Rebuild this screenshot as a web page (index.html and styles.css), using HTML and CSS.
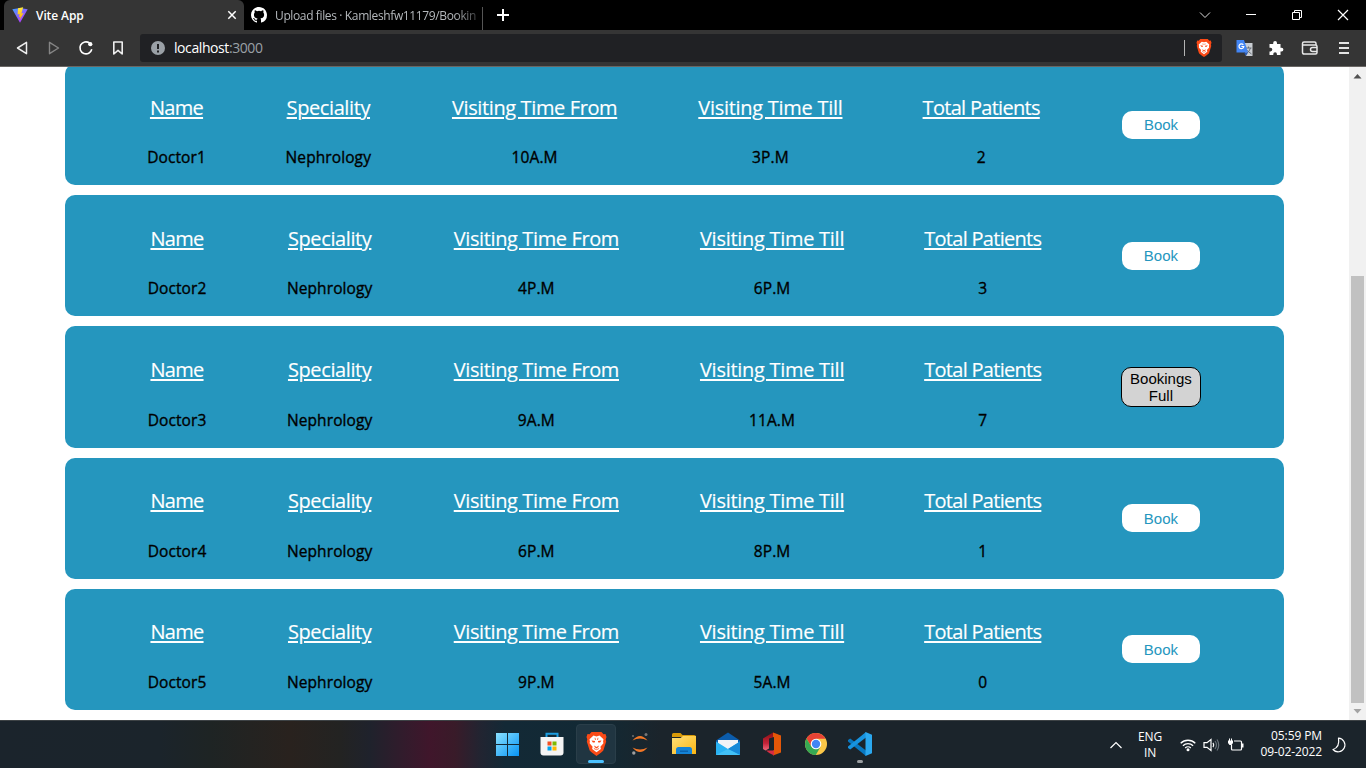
FILE: index.html
```html
<!DOCTYPE html>
<html lang="en">
<head>
<meta charset="utf-8">
<title>Vite App</title>
<link rel="stylesheet" href="styles.css">
</head>
<body>
<svg width="0" height="0" class="defs">
  <defs>
    <linearGradient id="win" x1="0" y1="0" x2="1" y2="1"><stop offset="0" stop-color="#8ae1ff"/><stop offset="1" stop-color="#0794f5"/></linearGradient>
    <linearGradient id="vite" x1="0" y1="0" x2=".7" y2="1"><stop offset="0" stop-color="#41a3ff"/><stop offset="1" stop-color="#bd34fe"/></linearGradient>
    <linearGradient id="bolt" x1="0" y1="0" x2="0" y2="1"><stop offset="0" stop-color="#ffea40"/><stop offset="1" stop-color="#ffa800"/></linearGradient>
    <linearGradient id="folder" x1="0" y1="0" x2="1" y2="1"><stop offset="0" stop-color="#ffe07a"/><stop offset="1" stop-color="#fbb612"/></linearGradient>
    <linearGradient id="office" x1="0" y1="0" x2="0" y2="1"><stop offset="0" stop-color="#8c0f12"/><stop offset=".6" stop-color="#c4243a"/><stop offset="1" stop-color="#f06a7d"/></linearGradient>
    <symbol id="lion" viewBox="0 0 20 24">
      <path fill="#fb4a16" d="M5 0h10l2 2.300 2-.2 1 3-.8 2.300.5 2-2.900 9.200Q16 20 10 24 4 20 3.200 18.600L.3 9.400l.5-2L0 5.100l1-3 2 .2z"/>
      <path fill="#fff" d="M7 3.600 10 4.400 13 3.600 17 7.200l-.4 2.400.3 1.600-3 3.600.5 2.200L10 20.200l-4.400-3.200.5-2.200-3-3.600.3-1.600L3 7.200z"/>
      <path fill="#fb4a16" d="M5 8.400 8.600 9 8.200 10.600 6.400 10.400zM15 8.400 11.400 9l.4 1.600 1.800-.2zM7.600 13.600 10 15l2.400-1.400-.6 1.700L10 16.400l-1.800-1.100z"/>
      <path fill="none" stroke="#fb4a16" stroke-width=".8" d="M8.500 5.800 9 8M11.500 5.800 11 8M7.400 16.500 10 17.700l2.600-1.200"/>
    </symbol>
  </defs>
</svg>
<div class="window">
  <header class="tabs">
    <div class="tab tab-active">
      <svg width="16" height="16" viewBox="0 0 16 16"><path fill="url(#vite)" d="M.3 2.200 8 .9l7.700 1.300L8 15.800z"/><path fill="url(#bolt)" d="M11.200.2 6 1.200 5.600 7.500l2-.4-.6 3 1.400-.4-.9 3.600L11.600 6l-2.200.4z"/></svg>
      <span class="tab-title">Vite App</span>
      <svg class="tab-close" width="10" height="10" viewBox="0 0 10 10"><path stroke="#fff" stroke-width="1.500" d="m1.300 1.300 7.400 7.400M8.700 1.300 1.300 8.700"/></svg>
    </div>
    <div class="tab tab-idle">
      <svg width="16" height="16" viewBox="0 0 16 16"><path fill="#fff" d="M8 0C3.580 0 0 3.580 0 8c0 3.540 2.290 6.530 5.470 7.590.4.070.55-.17.55-.38 0-.19-.01-.82-.01-1.490-2.010.37-2.530-.49-2.690-.94-.09-.23-.48-.94-.82-1.130-.28-.15-.68-.52-.01-.53.63-.01 1.080.58 1.230.82.72 1.210 1.870.87 2.330.66.070-.52.28-.87.51-1.070-1.780-.2-3.640-.89-3.640-3.950 0-.87.31-1.590.82-2.150-.08-.2-.36-1.020.08-2.120 0 0 .67-.21 2.200.82a7.400 7.400 0 0 1 4 0c1.530-1.040 2.200-.82 2.200-.82.44 1.100.16 1.920.08 2.120.51.56.82 1.270.82 2.150 0 3.070-1.870 3.750-3.650 3.950.29.25.54.73.54 1.480 0 1.070-.01 1.930-.01 2.200 0 .21.15.46.55.38A8 8 0 0 0 16 8c0-4.420-3.580-8-8-8z"/></svg>
      <span class="tab-title">Upload files · Kamleshfw11179/Bookin</span>
    </div>
    <svg class="new-tab" width="12" height="12" viewBox="0 0 12 12"><path stroke="#fff" stroke-width="2" d="M6 0v12M0 6h12"/></svg>
    <div class="window-buttons">
      <svg width="12" height="12" viewBox="0 0 12 12"><path fill="none" stroke="#ddd" d="m1 3.500 5 5 5-5"/></svg>
      <svg width="12" height="12" viewBox="0 0 12 12"><path stroke="#fff" d="M1 5.500h10"/></svg>
      <svg width="12" height="12" viewBox="0 0 12 12"><path fill="none" stroke="#fff" d="M1.500 3.500h7v7h-7zM3.500 3V1.500h7v7H9"/></svg>
      <svg width="12" height="12" viewBox="0 0 12 12"><path stroke="#fff" stroke-width="1.200" d="m1 1 10 10M11 1 1 11"/></svg>
    </div>
  </header>

  <nav class="toolbar">
    <div class="nav-buttons">
      <svg width="16" height="16" viewBox="0 0 16 16"><path fill="none" stroke="#eee" stroke-width="1.500" stroke-linejoin="round" d="M12.500 2.300v11.400L3.500 8z"/></svg>
      <svg width="16" height="16" viewBox="0 0 16 16"><path fill="none" stroke="#858585" stroke-width="1.400" stroke-linejoin="round" d="M3.500 2.300v11.400L12.500 8z"/></svg>
      <svg width="16" height="16" viewBox="0 0 16 16"><path fill="none" stroke="#fff" stroke-width="1.600" d="M13.800 9.300A6 6 0 1 1 11.500 3"/><circle cx="12.300" cy="4.200" r="2.100" fill="#fff"/></svg>
      <svg width="16" height="16" viewBox="0 0 16 16"><path fill="none" stroke="#eee" stroke-width="1.600" stroke-linejoin="round" d="M3.800 2h8.400v12L8 10.300 3.800 14z"/></svg>
    </div>
    <div class="address">
      <svg width="14" height="14" viewBox="0 0 14 14"><circle cx="7" cy="7" r="7" fill="#9aa0a6"/><path stroke="#202124" stroke-width="2" d="M7 3v5M7 9.500v2"/></svg>
      <span class="url">localhost<span class="port">:3000</span></span>
      <span class="divider"></span>
      <svg class="shield" width="16" height="18"><use href="#lion"/></svg>
    </div>
    <svg class="translate" width="17" height="17" viewBox="0 0 17 17"><path fill="#c9cdd2" d="M7 3h9.500v13H10z"/><path stroke="#687078" fill="none" d="M9.500 8h6M12.500 6.500V8M14.500 8q-1 3.500-4 5.500M10.500 10l5 4"/><path fill="#4285f4" d="M.5 0H8l4 12.500H.5z"/><path fill="#2858b0" d="m8 12.500 4 0-2 3.500z"/><path fill="none" stroke="#fff" stroke-width="1.200" d="M7.300 4.800A2.400 2.400 0 1 0 7.800 6.500H5.400"/></svg>
    <svg class="puzzle" width="16" height="16" viewBox="0 0 16 16"><path fill="#fff" d="M1.500 4h3.700V3a1.900 1.900 0 0 1 3.800 0v1h3.500v3.700h1a1.900 1.900 0 0 1 0 3.800h-1V15H8.900v-1a1.800 1.800 0 0 0-3.600 0v1H1.500v-3.600h1a1.800 1.800 0 0 0 0-3.600h-1z"/></svg>
    <svg class="wallet" width="18" height="16" viewBox="0 0 18 16"><path fill="none" stroke="#e8e8e8" stroke-width="1.500" d="M15 5V3.500Q15 2 13.500 2H3Q1.500 2 1.500 3.500v8.700Q1.500 14 3.300 14h11.200Q16 14 16 12.500v-6Q16 5 14.500 5H2M16 7.500h-4.500a2 2 0 0 0 0 4H16"/></svg>
    <svg class="menu" width="10" height="14" viewBox="0 0 10 14"><path stroke="#e4e4e4" stroke-width="2" d="M0 2h10M0 7h10M0 12h10"/></svg>
  </nav>

  <main class="page">
    <section class="doctors">
      <article class="card card-first">
        <div class="cell"><h3 class="h-name">Name</h3><p>Doctor1</p></div>
        <div class="cell"><h3 class="h-spec">Speciality</h3><p>Nephrology</p></div>
        <div class="cell"><h3 class="h-from">Visiting Time From</h3><p>10A.M</p></div>
        <div class="cell"><h3 class="h-till">Visiting Time Till</h3><p>3P.M</p></div>
        <div class="cell"><h3 class="h-total">Total Patients</h3><p>2</p></div>
        <button class="book">Book</button>
      </article>
      <article class="card">
        <div class="cell"><h3 class="h-name">Name</h3><p>Doctor2</p></div>
        <div class="cell"><h3 class="h-spec">Speciality</h3><p>Nephrology</p></div>
        <div class="cell"><h3 class="h-from">Visiting Time From</h3><p>4P.M</p></div>
        <div class="cell"><h3 class="h-till">Visiting Time Till</h3><p>6P.M</p></div>
        <div class="cell"><h3 class="h-total">Total Patients</h3><p>3</p></div>
        <button class="book">Book</button>
      </article>
      <article class="card">
        <div class="cell"><h3 class="h-name">Name</h3><p>Doctor3</p></div>
        <div class="cell"><h3 class="h-spec">Speciality</h3><p>Nephrology</p></div>
        <div class="cell"><h3 class="h-from">Visiting Time From</h3><p>9A.M</p></div>
        <div class="cell"><h3 class="h-till">Visiting Time Till</h3><p>11A.M</p></div>
        <div class="cell"><h3 class="h-total">Total Patients</h3><p>7</p></div>
        <button class="book book-full">Bookings Full</button>
      </article>
      <article class="card">
        <div class="cell"><h3 class="h-name">Name</h3><p>Doctor4</p></div>
        <div class="cell"><h3 class="h-spec">Speciality</h3><p>Nephrology</p></div>
        <div class="cell"><h3 class="h-from">Visiting Time From</h3><p>6P.M</p></div>
        <div class="cell"><h3 class="h-till">Visiting Time Till</h3><p>8P.M</p></div>
        <div class="cell"><h3 class="h-total">Total Patients</h3><p>1</p></div>
        <button class="book">Book</button>
      </article>
      <article class="card">
        <div class="cell"><h3 class="h-name">Name</h3><p>Doctor5</p></div>
        <div class="cell"><h3 class="h-spec">Speciality</h3><p>Nephrology</p></div>
        <div class="cell"><h3 class="h-from">Visiting Time From</h3><p>9P.M</p></div>
        <div class="cell"><h3 class="h-till">Visiting Time Till</h3><p>5A.M</p></div>
        <div class="cell"><h3 class="h-total">Total Patients</h3><p>0</p></div>
        <button class="book">Book</button>
      </article>
    </section>
    <aside class="scrollbar">
      <svg width="17" height="17" viewBox="0 0 17 17"><path fill="#505050" d="M8.500 7 12.500 11.500h-8z"/></svg>
      <div class="thumb"></div>
      <svg width="17" height="17" viewBox="0 0 17 17"><path fill="#a3a3a3" d="M8.500 10.500 12.500 6h-8z"/></svg>
    </aside>
  </main>

  <footer class="taskbar">
    <div class="apps">
      <div class="app"><svg width="24" height="24" viewBox="0 0 24 24"><path fill="url(#win)" d="M0 1h11v11H0zM12 1h11v11H12zM0 13h11v11H0zM12 13h11v11H12z"/></svg></div>
      <div class="app"><svg width="24" height="24" viewBox="0 0 24 24"><path fill="none" stroke="#1c9de0" stroke-width="2" d="M6.500 6V1.800h11V6"/><path fill="#f4f4f4" d="M.5 5h23v15.500q0 3-3 3h-17q-3 0-3-3z"/><path fill="#f25022" d="M7.500 9.500h4v4h-4z"/><path fill="#7fba00" d="M12.500 9.500h4v4h-4z"/><path fill="#00a4ef" d="M7.500 14.500h4v4h-4z"/><path fill="#ffb900" d="M12.500 14.500h4v4h-4z"/></svg></div>
      <div class="app app-active"><svg width="21" height="24"><use href="#lion"/></svg><span class="running"></span></div>
      <div class="app"><svg width="20" height="24" viewBox="0 0 20 24"><path fill="#f37726" d="M2.500 8.500Q10-.5 17.500 8.500 10 4.500 2.500 8.500zM2.500 15.500q7.500 9 15 0-7.500 4-15 0z"/><circle cx="16" cy="2.500" r="1.500" fill="#767677"/><circle cx="3.800" cy="21" r="1.700" fill="#9e9e9e"/><circle cx="3" cy="4" r=".9" fill="#767677"/></svg></div>
      <div class="app"><svg width="24" height="24" viewBox="0 0 24 24"><path fill="#d99a08" d="M0 2.500Q0 1 1.500 1h7L10.500 3H22q2 0 2 2H0z"/><path fill="url(#folder)" d="M0 6h8.500L11 4h13v18H0z"/><path fill="#1483d6" d="M4 22v-4.500Q4 15 6.500 15h11q2.500 0 2.500 2.500V22z"/><path fill="#0a62ae" d="M8 18.500h8v1.500H8z"/></svg></div>
      <div class="app"><svg width="24" height="24" viewBox="0 0 24 24"><path fill="#0b5cab" d="M0 8.500 12 .5l12 8V14H0z"/><path fill="#f1f3f6" d="M2 8h20v6l-10 4L2 14z"/><path fill="#29b2f3" d="M0 9.500 12 17l12-7.500V23H0z"/><path fill="#1689d8" d="m24 9.500-12 7.500 12 6z"/><path fill="#53ccfa" d="m0 23 12-6 12 6z" opacity=".6"/></svg></div>
      <div class="app"><svg width="20" height="24" viewBox="0 0 20 24"><path fill="url(#office)" d="M1 6.500 11 .5l5 2v5L7 7.500v9L3.500 18.500 1 17z"/><path fill="#e45708" d="m11 .5 8 3v17l-8 3z"/><path fill="#1b242b" d="M7 6.500 12 5v13.500l-5-1z"/><path fill="#d82c42" d="M4 18.500h8v5q-5-2-8-5z"/></svg></div>
      <div class="app"><svg width="24" height="24" viewBox="0 0 24 24"><circle cx="12" cy="12" r="11" fill="#fbc748"/><path fill="#e84335" d="M2.500 6.500A11 11 0 0 1 21.600 6.700H12L7.400 14.800z"/><path fill="#36a853" d="M2.500 6.500 7.400 14.800 12 17.300 16.500 14.700 11.800 23A11 11 0 0 1 2.500 6.500z"/><circle cx="12" cy="12" r="5.300" fill="#fff"/><circle cx="12" cy="12" r="4.200" fill="#4285f4"/></svg></div>
      <div class="app"><svg width="24" height="24" viewBox="0 0 24 24"><path fill="#0877c0" d="m0 8 2.200-1.600L18 18.500V24L0 9.500z"/><path fill="#1793df" d="m0 16 2.200 1.600L18 5.500V0L0 14.500z"/><path fill="#2ba8ef" d="m17.500 0 6.500 2.800v18.400L17.500 24z"/></svg><span class="idle-dot"></span></div>
    </div>
    <div class="tray">
      <svg width="14" height="10" viewBox="0 0 14 10"><path fill="none" stroke="#fff" stroke-width="1.200" d="m1.500 8 5.500-5.500L12.500 8"/></svg>
      <div class="lang">ENG<br>IN</div>
      <svg class="wifi" width="16" height="14" viewBox="0 0 16 14"><g fill="none" stroke="#fff" stroke-width="1.300"><path d="M.7 5.300a10.300 10.300 0 0 1 14.600 0M2.900 7.700a7.200 7.200 0 0 1 10.200 0M5.200 10a4 4 0 0 1 5.600 0"/></g><circle cx="8" cy="11.800" r="1.500" fill="#fff"/></svg>
      <svg class="volume" width="17" height="14" viewBox="0 0 17 14"><path fill="none" stroke="#fff" stroke-width="1.200" d="M1 4.700h3L8 1.500v11L4 9.300H1zM10 4.800q1.500 2.200 0 4.400"/><path fill="none" stroke="#69727a" stroke-width="1.200" d="M12 3q3 4 0 8M14 1.500q3.500 5.500 0 11"/></svg>
      <svg class="battery" width="17" height="14" viewBox="0 0 17 14"><path fill="none" stroke="#fff" stroke-width="1.200" d="M7 3h6.500q1 0 1 1v7q0 1-1 1H5.500q-1 0-1-1V7"/><path fill="#fff" d="M1 2.500h1V.5h1v2h1v-2h1v2h1V5L4.500 7h-2L1 5zM15 5.500h1.500v4H15z"/></svg>
      <div class="clock">05:59 PM<br>09-02-2022</div>
      <svg class="moon" width="15" height="16" viewBox="0 0 15 16"><path fill="none" stroke="#fff" stroke-width="1.200" stroke-linejoin="round" d="M6.500 1.200A6.800 6.800 0 1 1 1 12.500Q8 10.500 6.500 1.200z"/></svg>
    </div>
  </footer>
</div>
</body>
</html>
```
FILE: styles.css
```css
* { box-sizing: border-box; }
body { margin: 0; background: #fff; font-family: "Open Sans", "Noto Sans", sans-serif; overflow: hidden; }
svg { display: block; flex: none; }
.defs { position: absolute; }
.window { display: flex; flex-direction: column; width: 1366px; height: 768px; }

/* Tab strip */
.tabs { display: flex; align-items: center; height: 30px; flex: none; padding-left: 4px; background: #000; font-size: 12px; color: #fff; }
.tab { display: flex; align-items: center; height: 30px; gap: 8px; padding-left: 8px; white-space: nowrap; }
.tab-active { width: 240px; background: #353535; border-radius: 6px 6px 0 0; font-weight: 600; letter-spacing: -0.1px; }
.tab-close { margin-left: auto; margin-right: 7px; }
.tab-idle { width: 239px; padding-left: 7px; color: #b4b8bc; background: linear-gradient(#555, #555) right 7px / 1px 23px no-repeat; }
.tab-idle .tab-title { width: 204px; letter-spacing: -0.37px; mask-image: linear-gradient(90deg, #000 88%, rgba(0, 0, 0, 0.25)); }
.new-tab { margin-left: 14px; }
.window-buttons { display: flex; gap: 34px; margin-left: auto; margin-right: 17px; }

/* Navigation bar */
.toolbar { display: flex; align-items: center; flex: none; height: 37px; padding: 0 17px 1px 14px; background: #353535; border-bottom: 1px solid #6a6764; }
.nav-buttons { display: flex; gap: 16px; }
.address { display: flex; align-items: center; width: 1082px; height: 28px; margin-left: 14px; padding: 0 10px 0 11px; background: #202124; border-radius: 3px; font-size: 14px; color: #fff; }
.url { margin-left: 9px; letter-spacing: -0.42px; }
.port { color: #9aa0a6; }
.divider { width: 1px; height: 16px; margin-left: auto; background: #b4b4b4; }
.shield { margin-left: 11px; }
.translate { margin: 2px 0 0 14px; }
.puzzle { margin-left: 15px; }
.wallet { margin-left: 17px; }
.menu { margin-left: auto; }

/* Doctor list */
.page { display: flex; flex: none; height: 653px; overflow: hidden; background: #fff; }
.doctors { display: flex; flex-direction: column; gap: 10px; width: 1219px; margin: -3.250px 65px 0; flex: none; }
.card { display: grid; grid-template-columns: 58px 87px 166px 145px 116px 80px; justify-content: space-between; flex: none; height: 121.250px; padding: 0 83px; background: #2596be; border-radius: 10px; }
.card-first { grid-template-columns: 57px 86px 166px 145px 116px 80px; column-gap: 80.300px; justify-content: start; }
.card-first .book { margin: 1px 0 0 3px; }
.cell { display: flex; flex-direction: column; align-items: center; padding-top: 29.700px; white-space: nowrap; }
.card-first .cell { padding-top: 30px; }
.cell h3 { margin: 0; font-size: 20px; line-height: 27px; font-weight: 400; color: #fff; -webkit-text-stroke: 0.15px #fff; text-decoration: underline; text-decoration-thickness: 2px; text-underline-offset: 2px; }
.h-name { letter-spacing: -0.7px; }
.h-spec { letter-spacing: -0.4px; }
.h-from { letter-spacing: -0.38px; }
.h-till { letter-spacing: -0.28px; }
.h-total { letter-spacing: -0.7px; }
.cell p { margin: 26.650px 0 0; font-size: 15.500px; line-height: 21px; font-weight: 400; color: #000; letter-spacing: 0.1px; -webkit-text-stroke: 0.35px #000; }
.book { align-self: center; justify-self: center; width: 78px; height: 28px; padding: 0; border: 0; border-radius: 10px; background: #fff; color: #2596be; font: 15px/17px "Liberation Sans", Arial, sans-serif; }
.book-full { width: 80px; height: 40px; border: 1px solid #000; background: #d3d3d3; color: #000; }

.scrollbar { display: flex; flex-direction: column; justify-content: space-between; width: 17px; height: 653px; background: #f1f1f1; }
.thumb { width: 13px; height: 427px; margin: 192px 2px 0; background: #c1c1c1; }

/* Taskbar */
.taskbar { display: flex; flex: none; height: 48px; padding-left: 486px; border-top: 1px solid #3d4245; color: #fff; background: linear-gradient(90deg, #1b242c 0, #1b242b 160px, #1e2424 210px, #29221e 290px, #232322 340px, #1f222c 370px, #331b2c 405px, #40162b 430px, #391b29 455px, #222431 480px, #132936 505px, #122934 600px, #1b242b 660px, #1b242b 100%); }
.apps { display: flex; }
.app { position: relative; display: flex; align-items: center; justify-content: center; width: 40px; height: 40px; margin: 3px 2px; border-radius: 4px; }
.app-active { background: #203541; border: 1px solid #2a3e49; }
.running { position: absolute; left: 11px; bottom: 0; width: 16px; height: 3px; border-radius: 2px; background: #4cc2ff; }
.idle-dot { position: absolute; left: 17px; bottom: 1px; width: 6px; height: 3px; border-radius: 2px; background: #9b9fa2; }
.tray { display: flex; align-items: center; margin-left: auto; margin-right: 19px; font-size: 12px; line-height: 16px; letter-spacing: -0.1px; }
.lang { width: 30px; margin-left: 12px; text-align: center; }
.wifi { margin-left: 15px; }
.volume { margin-left: 7px; }
.battery { margin-left: 7px; }
.clock { width: 78px; margin-top: -1px; text-align: right; white-space: nowrap; }
.moon { margin-left: 10px; }
```
